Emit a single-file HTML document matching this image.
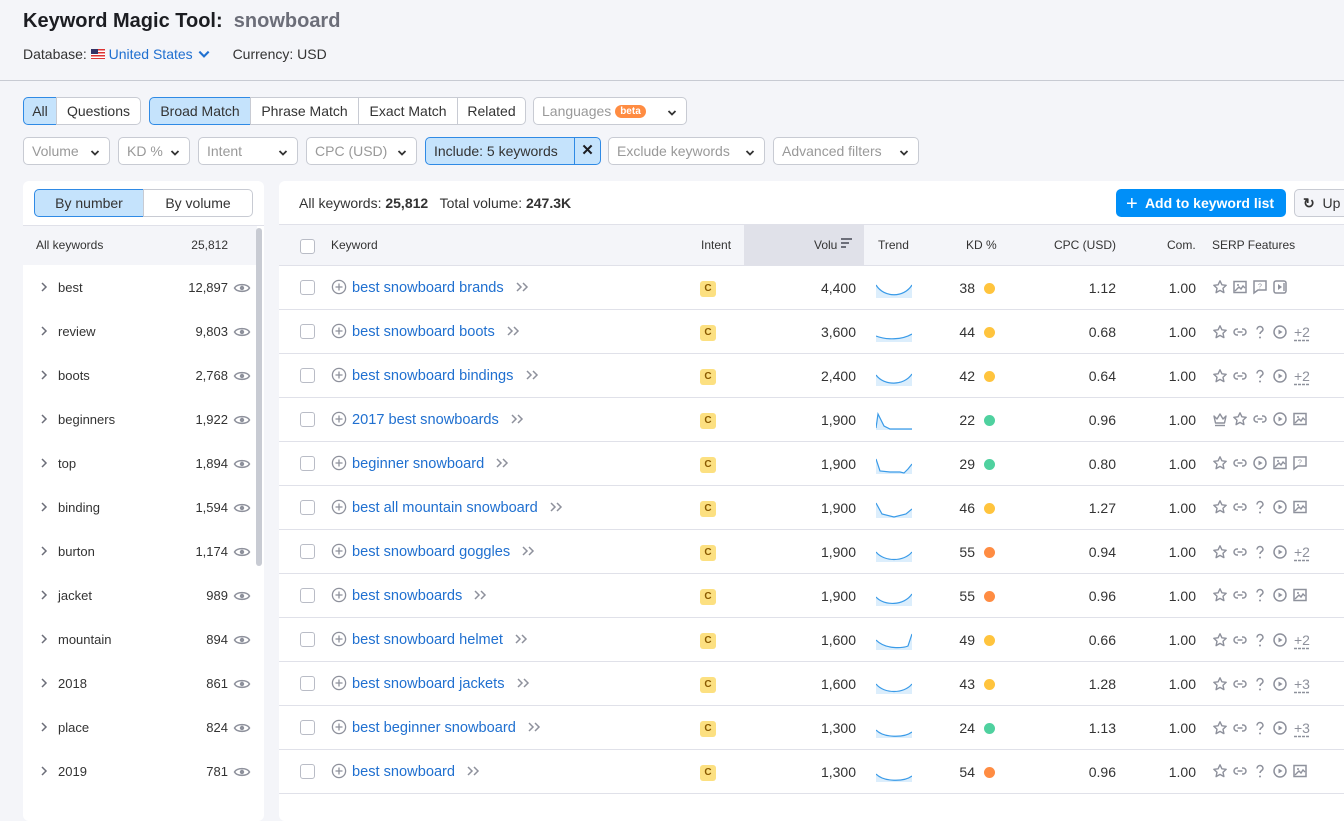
<!DOCTYPE html>
<html><head><meta charset="utf-8"><style>
*{box-sizing:border-box;margin:0;padding:0}
body{width:1344px;height:807px;overflow:hidden;background:#f4f5f9;font-family:"Liberation Sans",sans-serif;color:#333;position:relative;font-size:14px}
.a{position:absolute;white-space:nowrap}
.btn{position:absolute;height:28px;border:1px solid #c8cbd3;background:#fff;border-radius:5px;font-size:14px;line-height:26px;color:#333}
.sel{background:#c5e3fc;border-color:#2f8ae5}
.dd{position:absolute;height:28px;border:1px solid #c8cbd3;background:#fff;border-radius:5px;font-size:14px;line-height:26px;color:#999;padding-left:8px}
.dd svg{position:absolute;right:8px;top:9px}
.panel{position:absolute;background:#fff;border-radius:6px}
.lrow{position:absolute;left:23px;width:234px;height:44px;font-size:13px;color:#333}
.row{position:absolute;left:279px;width:1065px;height:44px;border-bottom:1px solid #e0e1e9;background:#fff;font-size:14px}
.row>*{position:absolute;top:0;line-height:44px}
.cb{left:21px!important;top:14px!important;width:15px;height:15px;border:1px solid #b9bcc6;border-radius:3px;background:#fff}
.kw{left:52px;color:#2070d0;font-size:14.6px}
.kw svg{vertical-align:-3px;margin-right:5px}
.ic{left:421px!important;top:15px!important;width:16px;height:16px;background:#fce081;border-radius:3px;color:#8a5a00;font-size:10px;font-weight:bold;text-align:center;line-height:16px!important}
.vol{right:488px;text-align:right}
.tr{left:597px;top:14px!important}
.kd{right:369px}
.dot{left:705px;top:17px!important;width:11px;height:11px;border-radius:50%}
.y{background:#ffc43d}.g{background:#4fd19f}.o{background:#ff8c42}
.cpc{right:228px}
.com{right:148px}
.serp{left:933px;top:13px!important;line-height:18px!important;color:#8e919c;font-size:14px;display:flex;gap:4px;align-items:center}
.serp svg{width:16px;height:16px}
.plus{text-decoration:underline dashed;text-underline-offset:3px;margin-left:2px}
.hd{position:absolute;top:238px;font-size:12px;color:#333}
</style></head><body>
<svg width="0" height="0" style="position:absolute">
<defs>
<symbol id="star" viewBox="0 0 16 16"><path d="M8 1.8l1.9 4 4.3.5-3.2 3 .9 4.3L8 11.4l-3.9 2.2.9-4.3-3.2-3 4.3-.5z" fill="none" stroke="#8e919c" stroke-width="1.4" stroke-linejoin="round"/></symbol>
<symbol id="img" viewBox="0 0 16 16"><rect x="2" y="2.5" width="12" height="11" fill="none" stroke="#8e919c" stroke-width="1.5"/><path d="M3 12l4-4 2 2 2-3 2 2" fill="none" stroke="#8e919c" stroke-width="1.4"/><circle cx="6" cy="6" r="1" fill="#8e919c"/></symbol>
<symbol id="chat" viewBox="0 0 16 16"><path d="M2 2h12v9H6l-4 3z" fill="none" stroke="#8e919c" stroke-width="1.5"/><text x="8" y="9.5" font-size="7" text-anchor="middle" fill="#8e919c" font-family="Liberation Sans">?</text></symbol>
<symbol id="vid" viewBox="0 0 16 16"><rect x="2" y="2" width="12" height="12" rx="2" fill="none" stroke="#8e919c" stroke-width="1.5"/><path d="M6 5v6l4-3z" fill="#8e919c"/><path d="M12 4v8" stroke="#8e919c" stroke-width="1.4"/></symbol>
<symbol id="link" viewBox="0 0 16 16"><path d="M6 5H5a3 3 0 000 6h1M10 5h1a3 3 0 010 6h-1M5.5 8h5" fill="none" stroke="#8e919c" stroke-width="1.5"/></symbol>
<symbol id="q" viewBox="0 0 16 16"><path d="M5 5.5a3 3 0 116 0c0 2-3 2-3 4.5" fill="none" stroke="#8e919c" stroke-width="1.5"/><circle cx="8" cy="13.5" r="1" fill="#8e919c"/></symbol>
<symbol id="play" viewBox="0 0 16 16"><circle cx="8" cy="8" r="6" fill="none" stroke="#8e919c" stroke-width="1.5"/><path d="M6.5 5.5v5l4-2.5z" fill="#8e919c"/></symbol>
<symbol id="crown" viewBox="0 0 16 16"><path d="M2 5l3 3 3-5 3 5 3-3-1.5 7h-9z" fill="none" stroke="#8e919c" stroke-width="1.4" stroke-linejoin="round"/><path d="M3 14.5h10" stroke="#8e919c" stroke-width="1.4"/></symbol>
<symbol id="pl" viewBox="0 0 16 16"><circle cx="8" cy="8" r="6.6" fill="none" stroke="#8e919c" stroke-width="1.3"/><path d="M8 4.5v7M4.5 8h7" stroke="#8e919c" stroke-width="1.3"/></symbol>
<symbol id="dbl" viewBox="0 0 16 16"><path d="M3 4l4 4-4 4M9 4l4 4-4 4" fill="none" stroke="#8e919c" stroke-width="1.5"/></symbol>
<symbol id="chev" viewBox="0 0 12 12"><path d="M2.5 4l3.5 3.5L9.5 4" fill="none" stroke="#333" stroke-width="1.8"/></symbol>
<symbol id="chevb" viewBox="0 0 12 12"><path d="M2 4l4 4 4-4" fill="none" stroke="#2070d0" stroke-width="1.8"/></symbol>
<symbol id="eye" viewBox="0 0 18 16"><path d="M1.5 8C4 3.5 14 3.5 16.5 8 14 12.5 4 12.5 1.5 8z" fill="none" stroke="#8e919c" stroke-width="1.5"/><circle cx="9" cy="8" r="2.2" fill="#8e919c"/></symbol>
<symbol id="rc" viewBox="0 0 10 12"><path d="M3 2l4 4-4 4" fill="none" stroke="#6c6e79" stroke-width="1.5"/></symbol>
</defs></svg>

<div class="a" style="left:23px;top:10px;font-size:20px;color:#1c1d22;font-weight:bold">Keyword Magic Tool:&nbsp; <span style="color:#6c6e79">snowboard</span></div>
<div class="a" style="left:23px;top:46px;font-size:14px;color:#333">Database: <span style="display:inline-block;width:14px;height:10px;background:repeating-linear-gradient(#d33 0 1.5px,#fff 1.5px 3px);position:relative;vertical-align:0"><span style="position:absolute;left:0;top:0;width:7px;height:5px;background:#336"></span></span> <span style="color:#2070d0">United States</span> <svg width="14" height="14" style="vertical-align:-2px"><use href="#chevb"/></svg><span style="margin-left:22px">Currency: USD</span></div>
<div class="a" style="left:0;top:80px;width:1344px;height:1px;background:#c8cbd3"></div>

<div class="btn sel" style="left:23px;top:97px;width:34px;border-radius:5px 0 0 5px;text-align:center">All</div>
<div class="btn" style="left:56px;top:97px;width:85px;border-radius:0 5px 5px 0;text-align:center">Questions</div>
<div class="btn sel" style="left:149px;top:97px;width:102px;border-radius:5px 0 0 5px;text-align:center">Broad Match</div>
<div class="btn" style="left:250px;top:97px;width:109px;border-radius:0;text-align:center">Phrase Match</div>
<div class="btn" style="left:358px;top:97px;width:100px;border-radius:0;text-align:center">Exact Match</div>
<div class="btn" style="left:457px;top:97px;width:69px;border-radius:0 5px 5px 0;text-align:center">Related</div>
<div class="dd" style="left:533px;top:97px;width:154px">Languages <span style="background:#ff8c42;color:#fff;font-size:10px;font-weight:bold;border-radius:8px;padding:1px 5px;vertical-align:2px">beta</span><svg width="12" height="12"><use href="#chev"/></svg></div>

<div class="dd" style="left:23px;top:137px;width:87px">Volume<svg width="12" height="12"><use href="#chev"/></svg></div>
<div class="dd" style="left:118px;top:137px;width:72px">KD %<svg width="12" height="12"><use href="#chev"/></svg></div>
<div class="dd" style="left:198px;top:137px;width:100px">Intent<svg width="12" height="12"><use href="#chev"/></svg></div>
<div class="dd" style="left:306px;top:137px;width:111px">CPC (USD)<svg width="12" height="12"><use href="#chev"/></svg></div>
<div class="btn sel" style="left:425px;top:137px;width:150px;border-radius:5px 0 0 5px;padding-left:8px">Include: 5 keywords</div>
<div class="btn sel" style="left:574px;top:137px;width:27px;border-radius:0 5px 5px 0;text-align:center;font-weight:bold;font-size:15px;color:#1c1d22">✕</div>
<div class="dd" style="left:608px;top:137px;width:157px">Exclude keywords<svg width="12" height="12"><use href="#chev"/></svg></div>
<div class="dd" style="left:773px;top:137px;width:146px">Advanced filters<svg width="12" height="12"><use href="#chev"/></svg></div>

<div class="panel" style="left:23px;top:181px;width:241px;height:640px"></div>
<div class="btn sel" style="left:34px;top:189px;width:110px;border-radius:5px 0 0 5px;text-align:center">By number</div>
<div class="btn" style="left:143px;top:189px;width:110px;border-radius:0 5px 5px 0;text-align:center">By volume</div>
<div class="a" style="left:23px;top:225px;width:241px;height:1px;background:#e0e1e9"></div>
<div class="a" style="left:23px;top:226px;width:234px;height:39px;background:#f4f5f9"></div>
<div class="a" style="left:36px;top:238px;font-size:12px">All keywords</div>
<div class="a" style="left:150px;width:78px;text-align:right;top:238px;font-size:12px">25,812</div>
<div class="a" style="left:256px;top:228px;width:6px;height:338px;background:#c8cbd3;border-radius:3px"></div>

<div id="left"></div>

<div class="panel" style="left:279px;top:181px;width:1080px;height:640px"></div>
<div class="a" style="left:299px;top:195px;font-size:14px">All keywords: <b>25,812</b>&nbsp;&nbsp; Total volume: <b>247.3K</b></div>
<div class="a" style="left:1116px;top:189px;width:170px;height:28px;background:#008ff8;border-radius:5px;color:#fff;font-weight:bold;font-size:14px;line-height:28px;padding-left:10px"><span style="font-size:20px;vertical-align:-2px;font-weight:normal">+</span>&nbsp; Add to keyword list</div>
<div class="a" style="left:1294px;top:189px;width:70px;height:28px;background:#f4f5f9;border:1px solid #c8cbd3;border-radius:5px;font-size:14px;line-height:26px;padding-left:8px;color:#333"><span style="font-weight:bold">↻</span>&nbsp; Up</div>
<div class="a" style="left:279px;top:224px;width:1065px;height:42px;background:#f4f5f9;border-top:1px solid #e0e1e9;border-bottom:1px solid #e0e1e9"></div>
<div class="a" style="left:744px;top:225px;width:120px;height:40px;background:#e0e1e9"></div>
<div class="a" style="left:300px;top:239px;width:15px;height:15px;border:1px solid #b9bcc6;border-radius:3px;background:#fff"></div>
<div class="hd" style="left:331px">Keyword</div>
<div class="hd" style="left:701px">Intent</div>
<div class="hd" style="left:814px">Volu <span style="display:inline-block;width:11px;vertical-align:1px"><span style="display:block;height:2px;background:#6c6e79;width:11px;margin-bottom:2px"></span><span style="display:block;height:2px;background:#6c6e79;width:8px;margin-bottom:2px"></span><span style="display:block;height:2px;background:#6c6e79;width:5px"></span></span></div>
<div class="hd" style="left:878px">Trend</div>
<div class="hd" style="left:966px">KD %</div>
<div class="hd" style="left:1054px">CPC (USD)</div>
<div class="hd" style="left:1167px">Com.</div>
<div class="hd" style="left:1212px">SERP Features</div>

<div id="rows"></div>
<script>
var L=[["best","12,897"],["review","9,803"],["boots","2,768"],["beginners","1,922"],["top","1,894"],["binding","1,594"],["burton","1,174"],["jacket","989"],["mountain","894"],["2018","861"],["place","824"],["2019","781"]];
var h="";L.forEach(function(r,i){var t=266+i*44;h+='<div class="lrow" style="top:'+t+'px"><svg class="a" style="left:16px;top:15px" width="10" height="12"><use href="#rc"/></svg><span class="a" style="left:35px;top:14px">'+r[0]+'</span><span class="a" style="left:120px;width:85px;text-align:right;top:14px">'+r[1]+'</span><svg class="a" style="left:210px;top:14px" width="18" height="16"><use href="#eye"/></svg></div>'});
document.getElementById("left").innerHTML=h;
var R=[["best snowboard brands","4,400",38,"y","1.12",["star","img","chat","vid"],"","M0 5 C8 18 28 18 36 5"],
["best snowboard boots","3,600",44,"y","0.68",["star","link","q","play"],"+2","M0 12 C10 16 26 16 36 10"],
["best snowboard bindings","2,400",42,"y","0.64",["star","link","q","play"],"+2","M0 7 C8 18 28 18 36 6"],
["2017 best snowboards","1,900",22,"g","0.96",["crown","star","link","play","img"],"","M0 16 L2 2 L8 14 L14 17 L36 17"],
["beginner snowboard","1,900",29,"g","0.80",["star","link","play","img","chat"],"","M0 3 L4 15 L14 16 L20 16 L24 16 L28 17 L32 13 L36 8"],
["best all mountain snowboard","1,900",46,"y","1.27",["star","link","q","play","img"],"","M0 3 L6 14 L18 17 L30 14 L36 9"],
["best snowboard goggles","1,900",55,"o","0.94",["star","link","q","play"],"+2","M0 8 C8 18 28 18 36 8"],
["best snowboards","1,900",55,"o","0.96",["star","link","q","play","img"],"","M0 9 C8 18 28 18 36 6"],
["best snowboard helmet","1,600",49,"y","0.66",["star","link","q","play"],"+2","M0 8 C10 18 28 16 32 14 L36 2"],
["best snowboard jackets","1,600",43,"y","1.28",["star","link","q","play"],"+3","M0 8 C8 18 28 18 36 8"],
["best beginner snowboard","1,300",24,"g","1.13",["star","link","q","play"],"+3","M0 10 C8 18 28 18 36 12"],
["best snowboard","1,300",54,"o","0.96",["star","link","q","play","img"],"","M0 10 C8 18 28 18 36 12"]];
h="";R.forEach(function(r,i){var t=266+i*44;var s="";r[5].forEach(function(k){s+='<svg><use href="#'+k+'"/></svg>'});if(r[6])s+='<span class="plus">'+r[6]+'</span>';
h+='<div class="row" style="top:'+t+'px"><div class="cb"></div><div class="kw"><svg width="16" height="16"><use href="#pl"/></svg>'+r[0]+' <svg width="16" height="16" style="margin-left:6px;margin-right:0"><use href="#dbl"/></svg></div><div class="ic">C</div><div class="vol">'+r[1]+'</div><svg class="tr" width="36" height="18"><path d="'+r[7]+' L36 18 L0 18z" fill="#dceefc"/><path d="'+r[7]+'" fill="none" stroke="#3a9be8" stroke-width="1.2"/></svg><div class="kd">'+r[2]+'</div><div class="dot '+r[3]+'"></div><div class="cpc">'+r[4]+'</div><div class="com">1.00</div><div class="serp">'+s+'</div></div>'});
document.getElementById("rows").innerHTML=h;
</script>
</body></html>
